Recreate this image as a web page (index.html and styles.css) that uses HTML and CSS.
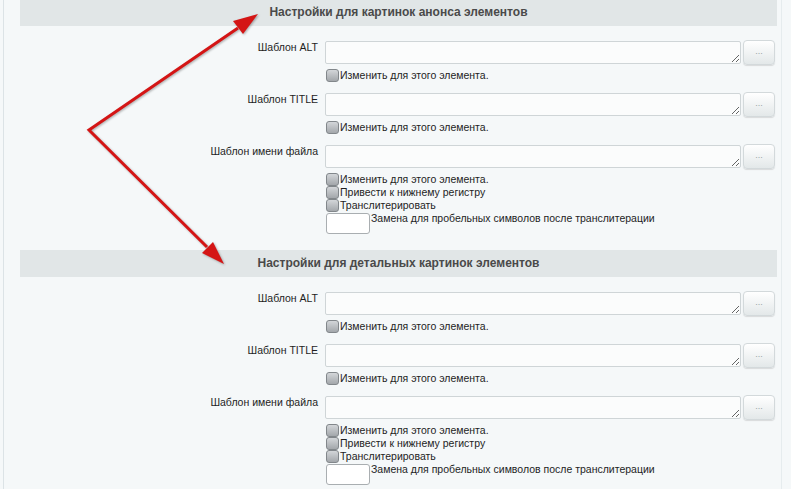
FILE: index.html
```html
<!DOCTYPE html>
<html lang="ru">
<head>
    <meta charset="UTF-8">
    <title>Настройки картинок</title>
    <link rel="stylesheet" href="styles.css">
</head>
<body>
    <div class="page">
        <div class="section-head">Настройки для картинок анонса элементов</div>
        <div class="form">
            <div class="row">
                <div class="label">Шаблон ALT</div>
                <div class="field">
                    <div class="input-line"><textarea></textarea><button class="btn-more">...</button></div>
                    <label class="check"><span class="box"></span>Изменить для этого элемента.</label>
                </div>
            </div>
            <div class="row">
                <div class="label">Шаблон TITLE</div>
                <div class="field">
                    <div class="input-line"><textarea></textarea><button class="btn-more">...</button></div>
                    <label class="check"><span class="box"></span>Изменить для этого элемента.</label>
                </div>
            </div>
            <div class="row">
                <div class="label">Шаблон имени файла</div>
                <div class="field">
                    <div class="input-line"><textarea></textarea><button class="btn-more">...</button></div>
                    <label class="check"><span class="box"></span>Изменить для этого элемента.</label>
                    <label class="check tight"><span class="box"></span>Привести к нижнему регистру</label>
                    <label class="check tight"><span class="box"></span>Транслитерировать</label>
                    <div class="space-line"><input class="small-input" type="text"><span>Замена для пробельных символов после транслитерации</span></div>
                </div>
            </div>
        </div>

        <div class="section-head">Настройки для детальных картинок элементов</div>
        <div class="form">
            <div class="row">
                <div class="label">Шаблон ALT</div>
                <div class="field">
                    <div class="input-line"><textarea></textarea><button class="btn-more">...</button></div>
                    <label class="check"><span class="box"></span>Изменить для этого элемента.</label>
                </div>
            </div>
            <div class="row">
                <div class="label">Шаблон TITLE</div>
                <div class="field">
                    <div class="input-line"><textarea></textarea><button class="btn-more">...</button></div>
                    <label class="check"><span class="box"></span>Изменить для этого элемента.</label>
                </div>
            </div>
            <div class="row">
                <div class="label">Шаблон имени файла</div>
                <div class="field">
                    <div class="input-line"><textarea></textarea><button class="btn-more">...</button></div>
                    <label class="check"><span class="box"></span>Изменить для этого элемента.</label>
                    <label class="check tight"><span class="box"></span>Привести к нижнему регистру</label>
                    <label class="check tight"><span class="box"></span>Транслитерировать</label>
                    <div class="space-line"><input class="small-input" type="text"><span>Замена для пробельных символов после транслитерации</span></div>
                </div>
            </div>
        </div>
    </div>

    <!-- red arrows drawn on top of the form -->
    <svg class="arrows" width="791" height="489" viewBox="0 0 791 489">
        <polyline points="238,28 89,130 207,247" fill="none" stroke="#d41515" stroke-width="3" stroke-linejoin="miter"/>
        <polygon points="258,14 243,34 233,21" fill="#d41515"/>
        <polygon points="224,264 202,253 213,242" fill="#d41515"/>
    </svg>
</body>
</html>
```

FILE: styles.css
```css
body {
    margin: 0;
    background: #f5f8f9;
    font-family: "Liberation Sans", Arial, sans-serif;
    font-size: 10.5px;
    color: #1e1e1e;
    position: relative;
    overflow: hidden;
}
.page {
    width: 757px;
    margin: -1px 0 0 3px;
    padding: 0 4px 0 16px;
    border-left: 1px solid #dce3e6;
    border-right: 1px solid #e6ecee;
    min-height: 500px;
}
.section-head {
    height: 27px;
    line-height: 26px;
    background: #e1e6e7;
    text-align: center;
    font-size: 12px;
    font-weight: bold;
    color: #4a4a4a;
}
.form {
    padding: 15px 0 16px;
}
.row {
    display: grid;
    grid-template-columns: 298px 1fr;
    column-gap: 7px;
    margin-bottom: 11px;
}
.row:last-child {
    margin-bottom: 0;
}
.label {
    text-align: right;
    line-height: 13px;
}
.field {
    display: flex;
    flex-direction: column;
    align-items: flex-start;
}
.input-line {
    display: flex;
    align-items: flex-start;
    height: 23px;
}
textarea {
    display: block;
    width: 416px;
    height: 23px;
    box-sizing: border-box;
    margin: 0;
    padding: 0;
    border: 1px solid #cfd5d7;
    border-radius: 2px;
    background: #fbfcfc;
    resize: vertical;
}
.btn-more {
    width: 32px;
    height: 25px;
    margin: -1px 0 0 2px;
    padding: 0 0 4px;
    border: 1px solid #d3d9db;
    border-radius: 4px;
    background: linear-gradient(#ffffff, #e3e8e9);
    box-shadow: 0 1px 1px rgba(0, 0, 0, 0.12);
    font-family: "Liberation Sans", Arial, sans-serif;
    font-size: 9px;
    color: #9aa3a6;
}
.check {
    display: flex;
    align-items: center;
    height: 13px;
    line-height: 13px;
    margin-top: 5px;
    margin-left: 1px;
}
.check.tight {
    margin-top: 0;
}
.box {
    width: 11px;
    height: 11px;
    margin-right: 1px;
    border: 1px solid #82878b;
    border-radius: 3px;
    background: linear-gradient(#d3d6d9, #a3a7ab);
}
.space-line {
    display: flex;
    align-items: flex-start;
    margin-top: 1px;
}
.small-input {
    width: 44px;
    height: 21px;
    box-sizing: border-box;
    margin: 0 1px;
    padding: 0;
    border: 1px solid #a9aeb1;
    border-radius: 3px;
    background: #fff;
}
.space-line span {
    line-height: 13px;
    margin-top: -1px;
}
.arrows {
    position: absolute;
    top: 0;
    left: 0;
    pointer-events: none;
    filter: drop-shadow(1px 1px 1px rgba(0, 0, 0, 0.3));
}
```
